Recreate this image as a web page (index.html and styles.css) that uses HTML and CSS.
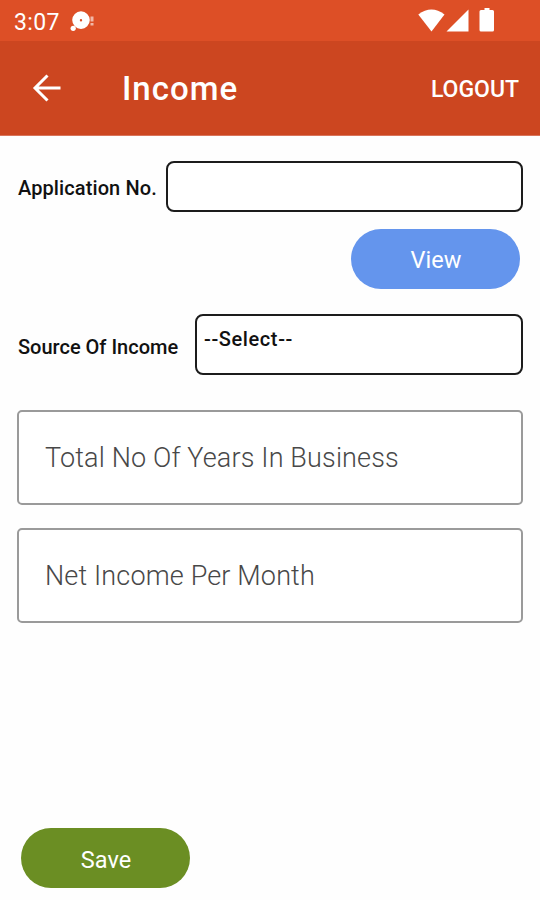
FILE: index.html
```html
<!DOCTYPE html>
<html lang="en">
<head>
<meta charset="utf-8">
<title>Income</title>
<link rel="stylesheet" href="styles.css">
</head>
<body>
<div class="status">
  <span class="time">3:07</span>
  <svg class="notice" width="26" height="22" viewBox="0 0 26 22" fill="#fff" aria-hidden="true">
    <path fill-rule="evenodd" d="M11 0.300a8.800 8.800 0 1 1 0 17.600a8.800 8.800 0 1 1 0-17.600zM11 8a1.200 1.200 0 1 0 0 2.400a1.200 1.200 0 1 0 0-2.400z"/>
    <circle cx="3.200" cy="17.300" r="2.600"/>
    <path d="M20.500 5.500h3v5h-3zM20.500 12h3v2.500h-3z" opacity=".6"/>
  </svg>
  <svg class="signals" width="78" height="26" viewBox="0 0 78 26" fill="#fff" aria-hidden="true">
    <path d="M.3 6.500Q13.500-3.500 26.500 6.500L13.500 23.500z"/>
    <path d="M50.500 1.500V23.500H28.500z"/>
    <path d="M66.500 0h5v2h3q1.500 0 1.500 1.500V22q0 1.500-1.500 1.500H63q-1.500 0-1.500-1.500V3.500Q61.500 2 63 2h3.500z"/>
  </svg>
</div>
<header class="bar">
  <svg class="back" width="30" height="28" viewBox="0 0 30 28" fill="none" stroke="#fff" stroke-width="3" aria-hidden="true">
    <path d="M28.500 14H3M15.500 1.500L3 14L15.500 26.500"/>
  </svg>
  <h1 class="title">Income</h1>
  <span class="logout">LOGOUT</span>
</header>
<main class="form">
  <div class="row row-app">
    <span class="label label-app">Application No.</span>
    <div class="box"></div>
  </div>
  <div class="view-row"><button class="pill view">View</button></div>
  <div class="row row-source">
    <span class="label label-source">Source Of Income</span>
    <div class="box select">--Select--</div>
  </div>
  <div class="field">Total No Of Years In Business</div>
  <div class="field">Net Income Per Month</div>
  <button class="pill save">Save</button>
</main>
</body>
</html>
```
FILE: styles.css
```css
* { box-sizing: border-box; }
body {
  margin: 0;
  width: 540px;
  height: 900px;
  display: flex;
  flex-direction: column;
  background: #fefefe;
  color: #111;
  font-family: Roboto, "Liberation Sans", sans-serif;
  overflow: hidden;
}
.status {
  height: 41px;
  display: flex;
  align-items: flex-start;
  padding: 8px 44px 0 14px;
  background: #dd4f26;
  color: #fff;
}
.time { width: 56px; font-size: 23px; line-height: 29px; letter-spacing: 0.4px; }
.notice { margin-top: 3px; }
.signals { margin-left: auto; }
.bar {
  height: 95px;
  display: flex;
  align-items: center;
  padding: 0 21px 0 32px;
  background: #cc4620;
  border-bottom: 1px solid #d9745a;
  color: #fff;
}
.title { margin: 1px 0 0 60px; font-size: 33px; line-height: 40px; font-weight: 500; letter-spacing: 1px; }
.logout { margin: 2px 0 0 auto; font-size: 23px; font-weight: 500; }
.form {
  flex: 1;
  display: flex;
  flex-direction: column;
  padding: 25px 17px 12px;
}
.row { display: flex; align-items: center; }
.row-app { height: 51px; }
.label { padding-left: 1px; font-size: 20px; line-height: 24px; font-weight: 500; white-space: nowrap; }
.label-app { width: 149px; margin-top: 2px; letter-spacing: 0.1px; }
.label-source { width: 178px; margin-top: 4px; }
.box {
  flex: 1;
  height: 100%;
  border: 2px solid #1c1c1c;
  border-radius: 8px;
  background: #fff;
}
.view-row { display: flex; justify-content: flex-end; margin: 17px 3px 0; }
.pill {
  width: 169px;
  height: 60px;
  padding: 3px 0 0 1px;
  border: 0;
  border-radius: 30px;
  color: #fff;
  font: 400 23.5px/28px Roboto, "Liberation Sans", sans-serif;
}
.view { padding-top: 2px; background: #6495ed; }
.row-source { height: 61px; margin: 25px 0 35px; }
.select { padding: 11px 7px; font-size: 20px; line-height: 24px; font-weight: 500; letter-spacing: 0.6px; }
.field {
  height: 95px;
  margin-bottom: 23px;
  display: flex;
  align-items: center;
  padding-left: 26px;
  border: 2px solid #9a9a9a;
  border-radius: 5px;
  background: #fff;
  color: #484848;
  font-size: 27px;
  font-weight: 300;
  line-height: 32px;
  letter-spacing: 0.15px;
}
.save { margin: auto 0 0 4px; background: #6b8e23; }
```
